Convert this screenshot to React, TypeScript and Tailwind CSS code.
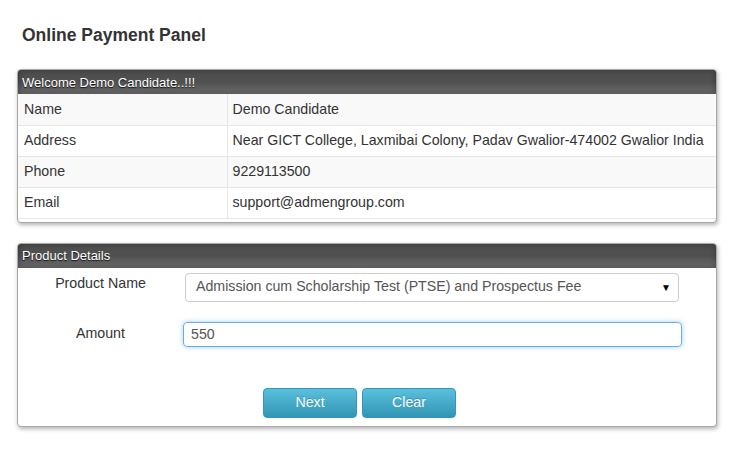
const rows = [
  { label: 'Name', value: 'Demo Candidate' },
  { label: 'Address', value: 'Near GICT College, Laxmibai Colony, Padav Gwalior-474002 Gwalior India' },
  { label: 'Phone', value: '9229113500' },
  { label: 'Email', value: 'support@admengroup.com' },
]

function PanelHeader({ title }: { title: string }) {
  return (
    <div className="h-[24px] flex items-center pl-[4px] rounded-t-[3px] bg-gradient-to-b from-[#4f4f4f] via-[#505050] to-[#6e6e6e] shadow-[inset_0_0_6px_rgba(0,0,0,0.35)] text-white text-[13px] leading-none [text-shadow:0_1px_1px_rgba(0,0,0,0.8)]">
      {title}
    </div>
  )
}

export default function App() {
  return (
    <div className="w-[749px] h-[460px] bg-white font-['Liberation_Sans',Arial,sans-serif] text-[#333]">
      <h1 className="pt-[25px] pl-[22px] text-[17.5px] leading-[20px] font-bold text-[#333]">Online Payment Panel</h1>

      <div className="mt-[24px] ml-[17px] w-[700px] border border-[#a8a8a8] rounded-[4px] bg-white shadow-[1px_2px_4px_rgba(0,0,0,0.3)] pb-[3px]">
        <PanelHeader title="Welcome Demo Candidate..!!!" />
        <table className="w-full text-[14.2px] border-collapse">
          <tbody>
            {rows.map((row, i) => (
              <tr key={row.label} className={i % 2 === 0 ? 'bg-[#f9f9f9]' : 'bg-white'}>
                <td className={`h-[31px] w-[209px] pl-[6px] border-r border-[#e6e6e6] ${i > 0 ? 'border-t' : ''} border-t-[#e6e6e6]`}>
                  {row.label}
                </td>
                <td className={`h-[31px] pl-[5px] ${i > 0 ? 'border-t' : ''} border-t-[#e6e6e6]`}>{row.value}</td>
              </tr>
            ))}
            <tr>
              <td colSpan={2} className="h-0 border-t border-[#e6e6e6]" />
            </tr>
          </tbody>
        </table>
      </div>

      <div className="mt-[20px] ml-[17px] w-[700px] border border-[#a8a8a8] rounded-[4px] bg-white shadow-[1px_2px_4px_rgba(0,0,0,0.3)] pb-[8px]">
        <PanelHeader title="Product Details" />
        <div className="flex pt-[5px]">
          <div className="w-[165px] text-center text-[14.2px] pt-0">Product Name</div>
          <div className="ml-[2px] w-[494px] h-[29px] border border-[#cccccc] rounded-[4px] flex items-center justify-between pl-[10px] pr-[7px] text-[14.2px] text-[#555]">
            <span>Admission cum Scholarship Test (PTSE) and Prospectus Fee</span>
            <span className="text-[10px] text-black">▼</span>
          </div>
        </div>
        <div className="flex mt-[20px]">
          <div className="w-[165px] text-center text-[14.2px] pt-[1px]">Amount</div>
          <input
            defaultValue="550"
            className="w-[499px] h-[25px] border border-[#66afe9] rounded-[4px] pl-[7px] text-[14.2px] text-[#555] outline-none shadow-[0_0_5px_rgba(102,175,233,0.6)]"
          />
        </div>
        <div className="flex gap-[5px] mt-[41px] pl-[245px]">
          {['Next', 'Clear'].map((label) => (
            <button
              key={label}
              className="w-[94px] h-[30px] rounded-[4px] border border-[#3399b8] bg-gradient-to-b from-[#5bc0de] to-[#2f96b4] text-white text-[14.2px] [text-shadow:0_-1px_0_rgba(0,0,0,0.2)]"
            >
              {label}
            </button>
          ))}
        </div>
      </div>
    </div>
  )
}
